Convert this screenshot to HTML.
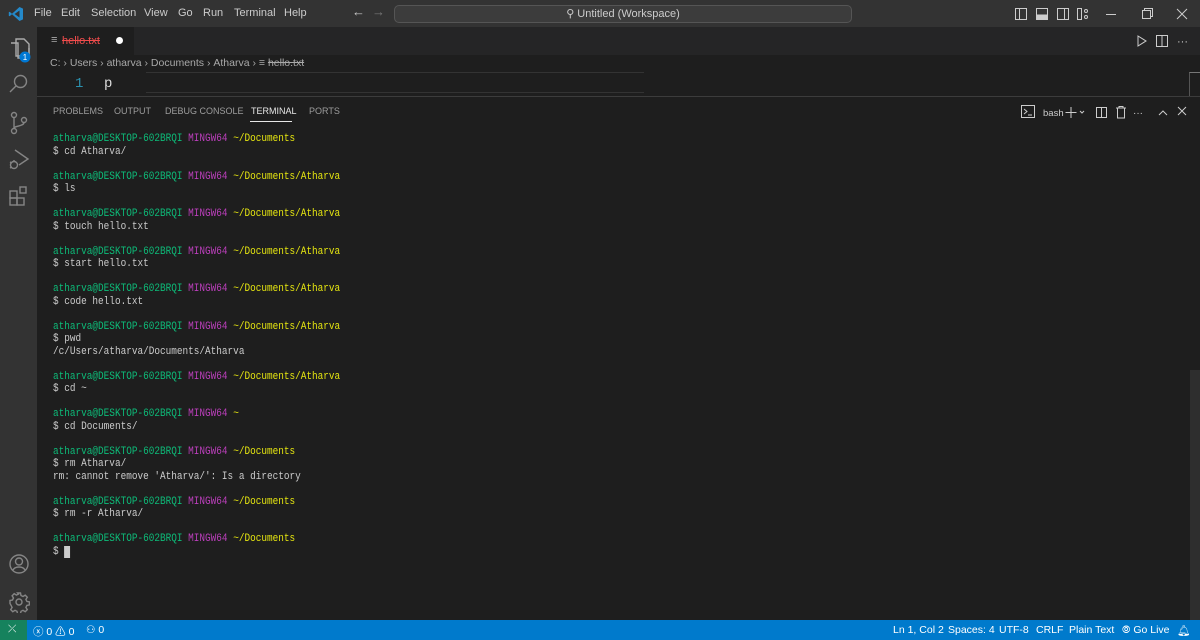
<!DOCTYPE html>
<html><head><meta charset="utf-8"><style>
*{margin:0;padding:0;box-sizing:border-box}
body{width:1200px;height:640px;background:#1e1e1e;font-family:"Liberation Sans",sans-serif;color:#ccc;position:relative;overflow:hidden}
.abs{position:absolute}
#title{left:0;top:0;width:1200px;height:27px;background:#333333}
#title .m{position:absolute;top:7px;font-size:11px;color:#ccc}
#search{left:394px;top:5px;width:458px;height:18px;background:#3c3c3c;border:1px solid #555;border-radius:5px;font-size:11px;color:#ccc;text-align:center;line-height:16px}
#act{left:0;top:27px;width:37px;height:593px;background:#333333}
#tabs{left:37px;top:27px;width:1163px;height:28px;background:#252526}
#tab{left:37px;top:27px;width:97px;height:28px;background:#1e1e1e}
.ico{stroke:#858585;fill:none;stroke-width:1.4}
#term{left:53px;top:133px;font-family:"Liberation Mono",monospace;font-size:11px;line-height:12.5px;color:#ccc;white-space:pre;transform:scaleX(0.853);transform-origin:0 0}
.g{color:#0dbc79}.p{color:#bc3fbc}.y{color:#e5e510}
#status{left:0;top:620px;width:1200px;height:20px;background:#007acc;color:#fff;font-size:10.5px}
#status span{position:absolute;top:4px}
.ph{position:absolute;top:106px;font-size:9px;color:#9d9d9d}
</style></head><body>
<div id="title" class="abs">
<svg class="abs" style="left:8px;top:6px" width="16" height="16" viewBox="0 0 16 16"><path d="M11.5 1 L15 2.6 V13.4 L11.5 15 L4 8.3 L1.6 10.2 L0.8 9.7 V6.3 L1.6 5.8 L4 7.7 Z M11.5 4.5 L6.6 8 L11.5 11.5 Z" fill="#2489ca"/></svg>
<span class="m" style="left:34px">File</span><span class="m" style="left:61px">Edit</span><span class="m" style="left:91px">Selection</span><span class="m" style="left:144px">View</span><span class="m" style="left:178px">Go</span><span class="m" style="left:203px">Run</span><span class="m" style="left:234px">Terminal</span><span class="m" style="left:284px">Help</span>
<span class="m" style="left:352px;font-size:13px;top:4px">←</span><span class="m" style="left:372px;font-size:13px;top:4px;color:#777">→</span>
<svg class="abs" style="left:1014px;top:7px" width="75" height="14" viewBox="0 0 75 14"><g stroke="#ccc" fill="none" stroke-width="1"><rect x="1.5" y="1.5" width="11" height="11"/><line x1="5.5" y1="1.5" x2="5.5" y2="12.5"/><rect x="22.5" y="1.5" width="11" height="11"/><rect x="22.5" y="8" width="11" height="4.5" fill="#ccc"/><rect x="43.5" y="1.5" width="11" height="11"/><line x1="50.5" y1="1.5" x2="50.5" y2="12.5"/><rect x="63.5" y="1.5" width="4" height="11"/><circle cx="72" cy="4" r="1.5"/><circle cx="72" cy="10" r="1.5"/></g></svg>
<svg class="abs" style="left:1100px;top:7px" width="90" height="14"><g stroke="#ccc" fill="none" stroke-width="1"><line x1="6" y1="7.5" x2="16" y2="7.5"/><rect x="42.5" y="3.5" width="8" height="8"/><path d="M44.5 3.5V1.5h8v8h-2"/><path d="M77 2l10 10M87 2l-10 10"/></g></svg>
</div>
<div id="search" class="abs">⚲ Untitled (Workspace)</div>
<div id="act" class="abs">
<svg class="abs" style="left:7px;top:9px" width="26" height="28"><g class="ico" style="stroke:#aaa"><path d="M4 7h7v15h11V12"/><path d="M9 3h8l5 5v12H9z"/></g><circle cx="18" cy="21" r="5.5" fill="#0078d4"/><text x="18" y="24" font-size="8" fill="#fff" text-anchor="middle" font-family="Liberation Sans">1</text></svg>
<svg class="abs" style="left:8px;top:46px" width="22" height="22"><g class="ico"><circle cx="12.5" cy="8.5" r="6"/><path d="M8.2 12.8L2 19"/></g></svg>
<svg class="abs" style="left:8px;top:84px" width="22" height="24"><g class="ico"><circle cx="6" cy="4" r="2.5"/><circle cx="6" cy="20" r="2.5"/><circle cx="16" cy="9" r="2.5"/><path d="M6 6.5v11M16 11.5c0 4-10 3-10 6"/></g></svg>
<svg class="abs" style="left:8px;top:120px" width="22" height="24"><g class="ico"><path d="M7 3l13 9-9 6"/><circle cx="6" cy="18" r="3.5"/><path d="M2 15l2 1M2 21l2-1M6 14v-1"/></g></svg>
<svg class="abs" style="left:8px;top:158px" width="22" height="22"><g class="ico"><rect x="2" y="6" width="7" height="7"/><rect x="2" y="13" width="7" height="7"/><rect x="9" y="13" width="7" height="7"/><rect x="12" y="2" width="6" height="6"/></g></svg>
<svg class="abs" style="left:8px;top:526px" width="22" height="22"><g class="ico"><circle cx="11" cy="11" r="9"/><circle cx="11" cy="8.5" r="3.5"/><path d="M5 17c2-4 10-4 12 0"/></g></svg>
<svg class="abs" style="left:8px;top:564px" width="22" height="22"><g class="ico"><circle cx="11" cy="11" r="3"/><path d="M9.5 2h3l.5 2.5 2 1 2.2-1.4 2.1 2.1-1.4 2.2 1 2 2.5.5v3l-2.5.5-1 2 1.4 2.2-2.1 2.1-2.2-1.4-2 1-.5 2.5h-3l-.5-2.5-2-1-2.2 1.4-2.1-2.1 1.4-2.2-1-2L2 12.5v-3l2.5-.5 1-2-1.4-2.2 2.1-2.1 2.2 1.4 2-1z"/></g></svg>
</div>
<div id="tabs" class="abs"></div>
<div id="tab" class="abs"><span class="abs" style="left:14px;top:7px;font-size:11px;color:#aaa">≡</span><span class="abs" style="left:25px;top:8px;font-size:11px;color:#f14c4c;text-decoration:line-through">hello.txt</span><span class="abs" style="left:79px;top:10px;width:7px;height:7px;border-radius:50%;background:#fff"></span></div>
<svg class="abs" style="left:1134px;top:34px" width="60" height="14"><g stroke="#ccc" fill="none" stroke-width="1"><path d="M4 2l8 5-8 5z"/><rect x="22.5" y="1.5" width="11" height="11"/><line x1="28" y1="1.5" x2="28" y2="12.5"/></g><text x="43" y="11" fill="#ccc" font-size="11" font-family="Liberation Sans">···</text></svg>
<div class="abs" style="left:50px;top:57px;font-size:10.5px;color:#a9a9a9">C: ›&nbsp;Users ›&nbsp;atharva ›&nbsp;Documents ›&nbsp;Atharva ›&nbsp;≡ <span style="text-decoration:line-through">hello.txt</span></div>
<div class="abs" style="left:146px;top:72px;width:498px;height:21px;border-top:1px solid #333;border-bottom:1px solid #333"></div>
<div class="abs" style="left:75px;top:76px;font-family:'Liberation Mono',monospace;font-size:14px;color:#2b91af">1</div>
<div class="abs" style="left:104px;top:76px;font-family:'Liberation Mono',monospace;font-size:14px;color:#ddd">p</div>
<div class="abs" style="left:1189px;top:72px;width:11px;height:24px;border-left:1px solid #555;border-top:1px solid #777"></div>
<div class="abs" style="left:37px;top:96px;width:1163px;height:1px;background:#3c3c3c"></div>
<span class="ph" style="left:53px">PROBLEMS</span><span class="ph" style="left:114px">OUTPUT</span><span class="ph" style="left:165px">DEBUG CONSOLE</span><span class="ph" style="left:251px;color:#e7e7e7">TERMINAL</span><span class="ph" style="left:309px">PORTS</span>
<div class="abs" style="left:250px;top:121px;width:42px;height:1px;background:#e7e7e7"></div>
<svg class="abs" style="left:1020px;top:104px" width="170" height="16"><g stroke="#ccc" fill="none" stroke-width="1"><rect x="1.5" y="1.5" width="13" height="12"/><path d="M4 5l3 2.5-3 2.5M8 11h4"/><path d="M51 3v11M45.5 8.5h11M60 7l2 2 2-2"/><rect x="76.5" y="3.5" width="10" height="10"/><line x1="81.5" y1="3.5" x2="81.5" y2="13.5"/><path d="M96 4h10M99 4V2.5h4V4M97.5 4v10h7V4"/><path d="M139 11l4-4 4 4M158 3l8 8M166 3l-8 8"/></g><text x="23" y="12" font-size="9.5" fill="#ccc" font-family="Liberation Sans">bash</text><text x="113" y="12" font-size="10" fill="#ccc" font-family="Liberation Sans">···</text></svg>
<div class="abs" style="left:1190px;top:370px;width:10px;height:250px;background:#2e2e2e"></div>
<div id="term" class="abs"><span class="g">atharva@DESKTOP-602BRQI</span> <span class="p">MINGW64</span> <span class="y">~/Documents</span>
$ cd Atharva/

<span class="g">atharva@DESKTOP-602BRQI</span> <span class="p">MINGW64</span> <span class="y">~/Documents/Atharva</span>
$ ls

<span class="g">atharva@DESKTOP-602BRQI</span> <span class="p">MINGW64</span> <span class="y">~/Documents/Atharva</span>
$ touch hello.txt

<span class="g">atharva@DESKTOP-602BRQI</span> <span class="p">MINGW64</span> <span class="y">~/Documents/Atharva</span>
$ start hello.txt

<span class="g">atharva@DESKTOP-602BRQI</span> <span class="p">MINGW64</span> <span class="y">~/Documents/Atharva</span>
$ code hello.txt

<span class="g">atharva@DESKTOP-602BRQI</span> <span class="p">MINGW64</span> <span class="y">~/Documents/Atharva</span>
$ pwd
/c/Users/atharva/Documents/Atharva

<span class="g">atharva@DESKTOP-602BRQI</span> <span class="p">MINGW64</span> <span class="y">~/Documents/Atharva</span>
$ cd ~

<span class="g">atharva@DESKTOP-602BRQI</span> <span class="p">MINGW64</span> <span class="y">~</span>
$ cd Documents/

<span class="g">atharva@DESKTOP-602BRQI</span> <span class="p">MINGW64</span> <span class="y">~/Documents</span>
$ rm Atharva/
rm: cannot remove 'Atharva/': Is a directory

<span class="g">atharva@DESKTOP-602BRQI</span> <span class="p">MINGW64</span> <span class="y">~/Documents</span>
$ rm -r Atharva/

<span class="g">atharva@DESKTOP-602BRQI</span> <span class="p">MINGW64</span> <span class="y">~/Documents</span>
$ <span style="background:#ccc"> </span></div>
<div id="status" class="abs">
<div class="abs" style="left:0;top:0;width:27px;height:20px;background:#16825d"></div>
<span style="left:8px;top:3px">⤫</span>
<span style="left:33px">ⓧ 0 ⚠ 0</span><span style="left:86px">⚇ 0</span>
<span style="left:893px">Ln 1, Col 2</span><span style="left:948px">Spaces: 4</span><span style="left:999px">UTF-8</span><span style="left:1036px">CRLF</span><span style="left:1069px">Plain Text</span><span style="left:1122px">⦾ Go Live</span><span style="left:1177px">🔔︎</span>
</div>
</body></html>
